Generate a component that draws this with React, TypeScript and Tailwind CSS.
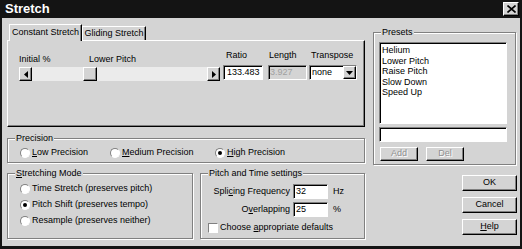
import React from "react";

const raised =
  "border border-t-white border-l-white border-r-black border-b-black bg-[#d4d4d4] shadow-[inset_-1px_-1px_0_#808080]";
const sunken =
  "border border-t-[#808080] border-l-[#808080] border-r-white border-b-white shadow-[inset_1px_1px_0_#000]";

function Radio({ checked }: { checked?: boolean }) {
  return (
    <span className="flex h-[10px] w-[10px] shrink-0 items-center justify-center rounded-full border border-t-[#808080] border-l-[#808080] border-r-white border-b-white bg-white">
      {checked && <span className="h-[4px] w-[4px] rounded-full bg-black" />}
    </span>
  );
}

function Group({
  label,
  className,
  children,
}: {
  label: React.ReactNode;
  className: string;
  children?: React.ReactNode;
}) {
  return (
    <div
      className={`relative border border-[#808080] shadow-[inset_1px_1px_0_#fff,1px_1px_0_#fff] ${className}`}
    >
      <span className="absolute -top-[6px] left-[7px] bg-[#d4d4d4] px-[1px] leading-[11px]">
        {label}
      </span>
      {children}
    </div>
  );
}

function Arrow({ dir }: { dir: "left" | "right" | "down" }) {
  if (dir === "down")
    return (
      <svg width="7" height="4" viewBox="0 0 7 4">
        <path d="M0 0h7L3.5 4z" fill="#000" />
      </svg>
    );
  return (
    <svg width="4" height="7" viewBox="0 0 4 7">
      <path d={dir === "left" ? "M4 0v7L0 3.5z" : "M0 0v7l4-3.5z"} fill="#000" />
    </svg>
  );
}

export default function App() {
  return (
    <div className="flex h-[249px] w-[522px] flex-col border-x-2 border-b-[3px] border-[#141414] bg-[#d4d4d4] font-['Liberation_Sans',Arial,sans-serif] text-[9px] text-black">
      {/* title bar */}
      <div className="flex h-[18px] shrink-0 items-start justify-between bg-[#141414]">
        <span className="pl-[3px] text-[13px] font-bold leading-[18px] text-white">Stretch</span>
        <span className={`mr-[1px] mt-[2px] flex h-[14px] w-[16px] items-center justify-center ${raised}`}>
          <svg width="9" height="8" viewBox="0 0 9 8">
            <path d="M0.5 0.5l8 7M8.5 0.5l-8 7" stroke="#000" strokeWidth="1.6" />
          </svg>
        </span>
      </div>

      <div className="flex pl-[5px]">
        {/* left column */}
        <div className="flex w-[358px] flex-col">
          <div className="mt-[6px] flex h-[16px] items-end pl-[2px]">
            <div className="relative z-10 -mb-px flex h-[17px] w-[73px] items-center justify-center border-l border-t border-r border-t-white border-l-white border-r-black bg-[#d4d4d4] shadow-[inset_-1px_0_0_#808080]">
              Constant Stretch
            </div>
            <div className="flex h-[14px] w-[64px] items-center justify-center border-l border-t border-r border-t-white border-l-white border-r-black shadow-[inset_-1px_0_0_#808080]">
              Gliding Stretch
            </div>
          </div>

          <div className="flex h-[87px] border border-t-white border-l-white border-r-black border-b-black pl-[11px] shadow-[inset_-1px_-1px_0_#808080]">
            <div className="flex w-[201px] flex-col pt-[13px]">
              <div className="flex h-[11px] leading-[11px]">
                <span className="w-[70px]">Initial %</span>
                <span>Lower Pitch</span>
              </div>
              <div className="mt-[2px] flex h-[14px] bg-[#ebebeb]">
                <span className={`flex w-[13px] items-center justify-center ${raised}`}>
                  <Arrow dir="left" />
                </span>
                <span className="w-[51px]" />
                <span className={`w-[14px] ${raised}`} />
                <span className="flex-1" />
                <span className={`flex w-[13px] items-center justify-center ${raised}`}>
                  <Arrow dir="right" />
                </span>
              </div>
            </div>

            <div className="ml-[3px] flex w-[40px] flex-col pt-[9px]">
              <span className="h-[11px] pl-[3px] leading-[11px]">Ratio</span>
              <span className={`mt-[4px] h-[15px] bg-white pl-[3px] leading-[13px] ${sunken}`}>133.483</span>
            </div>
            <div className="ml-[5px] flex w-[39px] flex-col pt-[9px]">
              <span className="h-[11px] pl-[1px] leading-[11px]">Length</span>
              <span className={`mt-[4px] h-[15px] bg-[#d4d4d4] pl-[1px] leading-[13px] text-[#a0a0a0] ${sunken}`}>
                3.927
              </span>
            </div>
            <div className="ml-[2px] flex w-[48px] flex-col pt-[9px]">
              <span className="h-[11px] pl-[2px] leading-[11px]">Transpose</span>
              <span className={`mt-[4px] flex h-[15px] bg-white ${sunken}`}>
                <span className="flex-1 pl-[2px] leading-[13px]">none</span>
                <span className={`flex w-[13px] items-center justify-center ${raised}`}>
                  <Arrow dir="down" />
                </span>
              </span>
            </div>
          </div>

          <Group label="Precision" className="mt-[11px] h-[25px]">
            <div className="flex h-[10px] items-center pl-[12px] pt-0 mt-[9px]">
              <span className="flex w-[90px] items-center gap-[2px]">
                <Radio />
                <span>
                  <span className="underline">L</span>ow Precision
                </span>
              </span>
              <span className="flex w-[105px] items-center gap-[2px]">
                <Radio />
                <span>
                  <span className="underline">M</span>edium Precision
                </span>
              </span>
              <span className="flex items-center gap-[2px]">
                <Radio checked />
                <span>
                  <span className="underline">H</span>igh Precision
                </span>
              </span>
            </div>
          </Group>

          <div className="mt-[10px] flex gap-[7px]">
            <Group
              label={
                <>
                  <span className="underline">S</span>tretching Mode
                </>
              }
              className="h-[66px] w-[186px]"
            >
              <div className="flex flex-col pl-[12px] pt-[7px]">
                <span className="flex h-[16px] items-center gap-[2px]">
                  <Radio />
                  Time Stretch (preserves pitch)
                </span>
                <span className="flex h-[16px] items-center gap-[2px]">
                  <Radio checked />
                  Pitch Shift (preserves tempo)
                </span>
                <span className="flex h-[16px] items-center gap-[2px]">
                  <Radio />
                  Resample (preserves neither)
                </span>
              </div>
            </Group>

            <Group label="Pitch and Time settings" className="h-[66px] flex-1">
              <div className="flex flex-col pt-[10px]">
                <div className="flex h-[15px] items-center">
                  <span className="w-[89px] text-right">
                    Spli<span className="underline">c</span>ing Frequency
                  </span>
                  <span className={`ml-[3px] h-[15px] w-[35px] bg-white pl-[2px] leading-[13px] ${sunken}`}>32</span>
                  <span className="ml-[5px]">Hz</span>
                </div>
                <div className="mt-[3px] flex h-[15px] items-center">
                  <span className="w-[89px] text-right">
                    O<span className="underline">v</span>erlapping
                  </span>
                  <span className={`ml-[3px] h-[15px] w-[35px] bg-white pl-[2px] leading-[13px] ${sunken}`}>25</span>
                  <span className="ml-[5px]">%</span>
                </div>
                <div className="mt-[5px] flex h-[11px] items-center pl-[7px]">
                  <span className="h-[10px] w-[10px] border border-t-[#808080] border-l-[#808080] border-r-white border-b-white bg-white" />
                  <span className="ml-[2px]">
                    Choose <span className="underline">a</span>ppropriate defaults
                  </span>
                </div>
              </div>
            </Group>
          </div>
        </div>

        {/* right column */}
        <div className="ml-[8px] flex w-[145px] flex-col">
          <Group label="Presets" className="mt-[14px] h-[133px] w-[143px]">
            <div className="flex flex-col pl-[5px] pt-[9px]">
              <div className={`h-[82px] w-[128px] bg-white pl-[2px] pt-[2px] leading-[10.5px] ${sunken}`}>
                <div>Helium</div>
                <div>Lower Pitch</div>
                <div>Raise Pitch</div>
                <div>Slow Down</div>
                <div>Speed Up</div>
              </div>
              <div className={`mt-[3px] h-[15px] w-[128px] bg-white ${sunken}`} />
              <div className="mt-[5px] flex h-[14px]">
                <span className={`ml-[1px] flex w-[38px] items-center justify-center text-[#909090] [text-shadow:1px_1px_0_#fff] ${raised}`}>
                  Add
                </span>
                <span className={`ml-[8px] flex w-[38px] items-center justify-center text-[#909090] [text-shadow:1px_1px_0_#fff] ${raised}`}>
                  Del
                </span>
              </div>
            </div>
          </Group>

          <div className="ml-[89px] flex w-[55px] flex-col">
            <span className={`mt-[10px] flex h-[16px] items-center justify-center ${raised}`}>OK</span>
            <span className={`mt-[6px] flex h-[16px] items-center justify-center ${raised}`}>Cancel</span>
            <span className={`mt-[6px] flex h-[16px] items-center justify-center ${raised}`}>
              <span>
                <span className="underline">H</span>elp
              </span>
            </span>
          </div>
        </div>
      </div>
    </div>
  );
}
